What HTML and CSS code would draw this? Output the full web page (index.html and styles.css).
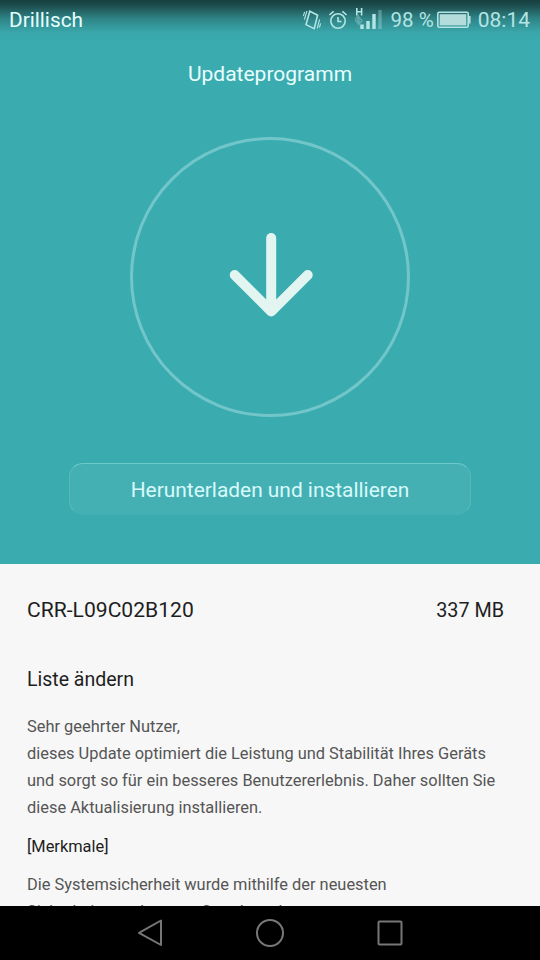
FILE: index.html
```html
<!DOCTYPE html>
<html lang="de">
<head>
    <meta charset="UTF-8">
    <meta name="viewport" content="width=device-width, initial-scale=1.0">
    <title>Updateprogramm</title>
    <link rel="stylesheet" href="styles.css">
</head>
<body>

<div class="screen">
    <header class="update">
        <div class="status-bar">
            <span class="carrier">Drillisch</span>
            <div class="status-icons">
                <svg class="icon-vibrate" width="18" height="20" viewBox="0 0 18 20">
                    <path d="M6.8 1.2l7.8 4-3.4 13.4-8.2-4z"/>
                    <path class="thin" d="M4 .8L1.4 9.5M1.6 1.8L.4 6M16.6 9.5l-2.4 9M17.6 13.5l-1.2 4"/>
                </svg>
                <svg class="icon-alarm" width="20" height="20" viewBox="0 0 20 20">
                    <circle cx="10" cy="11" r="7.2"/>
                    <path d="M10 7v4.5h3.5M1.4 5L5.6 1.4M18.6 5L14.4 1.4"/>
                </svg>
                <svg class="icon-signal" width="27" height="24" viewBox="0 0 27 24">
                    <path class="net" d="M1.8 0v7.5M6.6 0v7.5M1.8 3.7h4.8"/>
                    <path class="off" d="M0 11.5l3-3.5v7zM4 9l3 3.5-3 3.5z"/>
                    <path class="bar" d="M7 21v-4.5M13 21v-8M19 21V6"/>
                    <path class="bar off" d="M25 21V2"/>
                </svg>
                <span class="percent">98 %</span>
                <svg class="icon-battery" width="34" height="18" viewBox="0 0 34 18">
                    <rect class="shell" x=".8" y="1.3" width="30.4" height="15" rx="1.5"/>
                    <rect class="level" x="2.7" y="3.2" width="26.6" height="11.2"/>
                    <path class="level" d="M32 5h1.6v7.5H32z"/>
                </svg>
                <span class="clock">08:14</span>
            </div>
        </div>
        <h1>Updateprogramm</h1>
        <div class="circle">
            <svg width="86" height="90" viewBox="0 0 86 90">
                <path d="M44.2 6v72M7.7 43l36.5 36.5L80.7 43"/>
            </svg>
        </div>
        <button type="button" class="install">Herunterladen und installieren</button>
    </header>

    <main class="details">
        <div class="version">
            <span class="build">CRR-L09C02B120</span>
            <span class="size">337 MB</span>
        </div>
        <h2>Liste ändern</h2>
        <p class="intro">Sehr geehrter Nutzer,<br>
            dieses Update optimiert die Leistung und Stabilität Ihres Geräts<br>
            und sorgt so für ein besseres Benutzererlebnis. Daher sollten Sie<br>
            diese Aktualisierung installieren.</p>
        <h3>[Merkmale]</h3>
        <p class="feature">Die Systemsicherheit wurde mithilfe der neuesten<br>
            Sicherheitspatches von Google verbessert.</p>
    </main>

    <nav class="nav-bar">
        <svg width="26" height="30" viewBox="0 0 26 30"><path d="M24 2.5v24.5L2 14.8z"/></svg>
        <svg width="30" height="30" viewBox="0 0 30 30"><circle cx="15" cy="15" r="13"/></svg>
        <svg width="26" height="26" viewBox="0 0 26 26"><rect x="1.5" y="1.5" width="23" height="23" rx="1"/></svg>
    </nav>
</div>

</body>
</html>
```

FILE: styles.css
```css
body {
    margin: 0;
    font-family: Roboto, "Liberation Sans", sans-serif;
    background-color: #000;
}
.screen {
    width: 540px;
    height: 960px;
    display: flex;
    flex-direction: column;
    overflow: hidden;
}
h1, h2, h3, p {
    margin: 0;
    font-weight: 400;
}
svg {
    display: block;
    flex: none;
    fill: none;
}
.update {
    height: 564px;
    flex: none;
    display: flex;
    flex-direction: column;
    align-items: center;
    background: linear-gradient(#173f40 0, #1d4b4c 5px, #2f8587 19px, #39a6aa 32px, #3aacb0 42px);
}
.status-bar {
    width: 100%;
    height: 39px;
    padding: 0 10px 0 9px;
    box-sizing: border-box;
    display: flex;
    justify-content: space-between;
    align-items: center;
    font-size: 21px;
    color: #b4e4e4;
}
.carrier {
    font-size: 20.8px;
    color: #e6ffff;
}
.status-icons {
    display: flex;
    align-items: center;
}
.status-icons svg {
    stroke: #b4e4e4;
    stroke-width: 1.6;
}
.percent {
    font-size: 20.5px;
}
.icon-vibrate {
    margin-right: 7px;
}
.icon-vibrate .thin {
    stroke-width: 1.1;
}
.icon-alarm {
    margin-right: 7px;
}
.icon-signal {
    margin-right: 9px;
}
.icon-signal .bar {
    stroke-width: 3.4;
}
.icon-signal .off {
    opacity: 0.35;
}
.icon-battery {
    margin: 0 7px 0 3px;
}
.icon-battery .level {
    fill: #b4dcda;
    stroke: none;
}
h1 {
    margin-top: 23px;
    font-size: 21px;
    line-height: 24px;
    color: #e9ffff;
}
.circle {
    width: 280px;
    height: 280px;
    margin-top: 51px;
    box-sizing: border-box;
    border: 3px solid #72c6ca;
    border-radius: 50%;
    display: flex;
    justify-content: center;
    align-items: center;
}
.circle svg {
    stroke: #e2f5f1;
    stroke-width: 10;
    stroke-linecap: round;
    stroke-linejoin: round;
}
.install {
    width: 402px;
    height: 52px;
    margin-top: 46px;
    padding: 1px 0 0;
    border: 1px solid #45b0b4;
    border-top-color: #6cc8ca;
    border-left-color: #56babd;
    border-right-color: #56babd;
    border-radius: 14px;
    background-color: #45b0b4;
    font-family: inherit;
    font-size: 20.9px;
    color: #d8fafa;
}
.details {
    height: 342px;
    flex: none;
    padding: 34px 36px 0 27px;
    box-sizing: border-box;
    overflow: hidden;
    background-color: #f7f7f7;
    color: #1e1e1e;
}
.version {
    display: flex;
    justify-content: space-between;
    align-items: baseline;
    font-size: 21.1px;
    line-height: 24px;
}
.size {
    font-size: 19.8px;
}
h2 {
    margin-top: 45px;
    font-size: 19.5px;
    line-height: 24px;
}
p {
    font-size: 16.4px;
    line-height: 27px;
    color: #555;
    white-space: nowrap;
}
.intro {
    margin-top: 21px;
}
h3 {
    margin-top: 12px;
    font-size: 16.4px;
    line-height: 27px;
}
.feature {
    margin-top: 11px;
}
.nav-bar {
    height: 54px;
    display: flex;
    justify-content: center;
    align-items: center;
    gap: 92px;
    background-color: #000;
}
.nav-bar svg {
    stroke: #777;
    stroke-width: 2;
    stroke-linejoin: round;
}
```
